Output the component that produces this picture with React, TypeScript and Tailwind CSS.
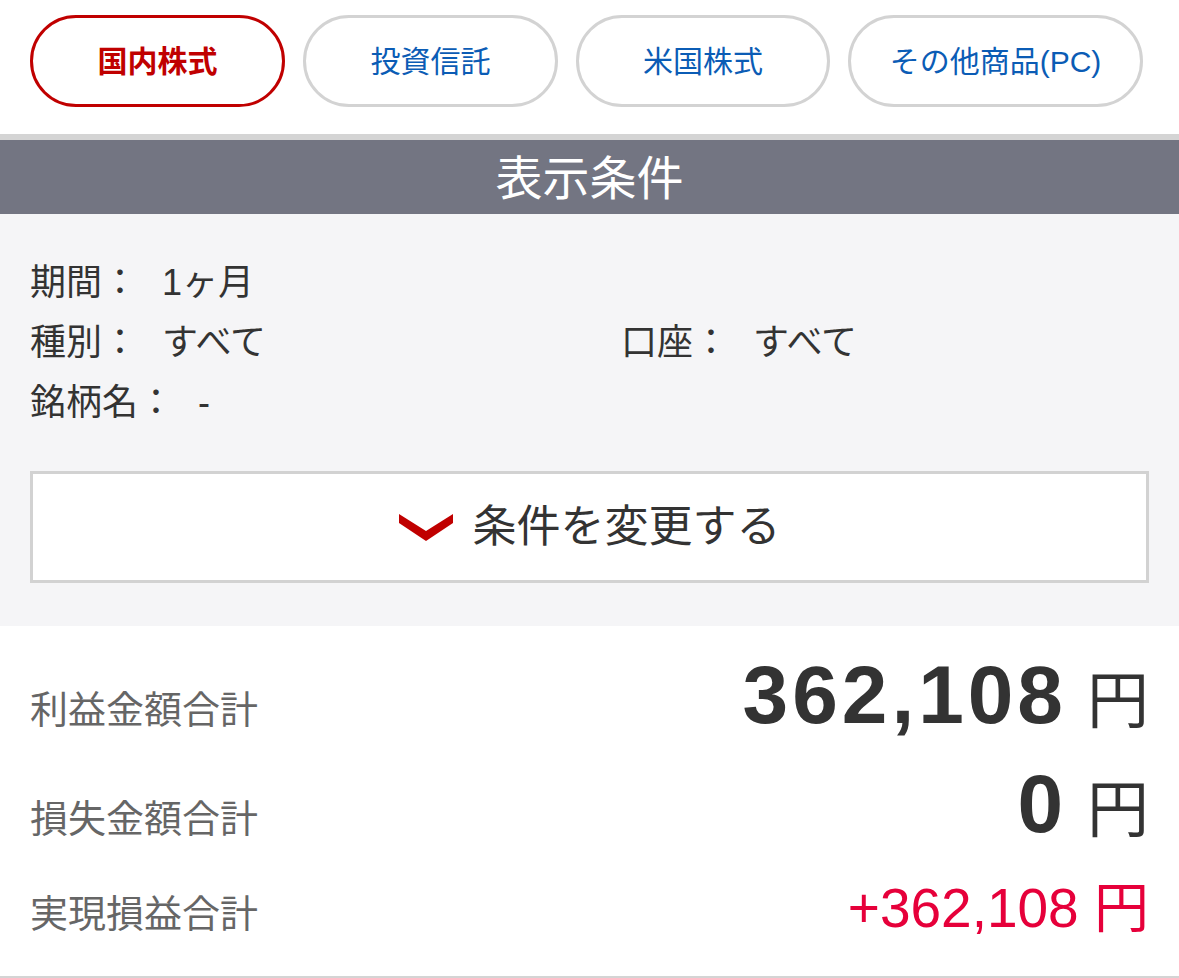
import React from 'react';

const font = { fontFamily: '"Liberation Sans", "Noto Sans CJK JP", sans-serif' };

const tabs = [
  { label: '国内株式', width: 'w-[255px]', active: true },
  { label: '投資信託', width: 'w-[255px]', active: false },
  { label: '米国株式', width: 'w-[254px]', active: false },
  { label: 'その他商品(PC)', width: 'w-[295px]', active: false },
];

const Chevron: React.FC = () => (
  <svg width="54" height="27" viewBox="0 0 54 27" className="shrink-0">
    <polygon points="0,0 27,17 54,0 54,9 27,27 0,9" fill="#c00000" />
  </svg>
);

const Cond: React.FC<{ label: string; value: string }> = ({ label, value }) => (
  <div>
    <span>{label}</span>
    <span className="ml-[24px]">{value}</span>
  </div>
);

export default function App() {
  return (
    <div className="w-[1179px] bg-white text-[#333]" style={font}>
      {/* tabs */}
      <div className="flex gap-[18px] pl-[30px] pt-[15px] pb-[27px]">
        {tabs.map((t) => (
          <div
            key={t.label}
            className={`${t.width} h-[92px] shrink-0 rounded-full border-[3px] flex items-center justify-center text-[30px] ${
              t.active
                ? 'border-[#c00000] text-[#c00000] font-bold'
                : 'border-[#d3d3d3] text-[#0b5cb5]'
            }`}>
            {t.label}
          </div>
        ))}
      </div>

      <div className="h-[6px] bg-[#d4d4d4]" />
      <div className="h-[74px] bg-[#737582] flex items-center justify-center text-white text-[47px] pt-[4px]">
        表示条件
      </div>

      {/* conditions */}
      <div className="bg-[#f5f5f7] px-[30px] pt-[39px] pb-[43px]">
        <div className="text-[36px] leading-[60px]">
          <Cond label="期間：" value="1ヶ月" />
          <div className="flex">
            <div className="w-[591px]">
              <Cond label="種別：" value="すべて" />
            </div>
            <Cond label="口座：" value="すべて" />
          </div>
          <Cond label="銘柄名：" value="-" />
        </div>
        <button className="mt-[38px] w-full h-[112px] bg-white border-[3px] border-[#d2d2d2] flex items-center justify-center gap-[20px] text-[44px] text-[#333]">
          <Chevron />
          <span>条件を変更する</span>
        </button>
      </div>

      {/* summary */}
      <div className="px-[30px] pt-[28px] border-b-[3px] border-[#d4d4d4]">
        <div className="h-[109px] flex items-baseline justify-between">
          <span className="text-[38px] leading-none text-[#666]">利益金額合計</span>
          <span className="leading-none">
            <span className="text-[82px] leading-none font-bold tracking-[4px]">362,108</span>
            <span className="text-[62px] leading-none ml-[20px]">円</span>
          </span>
        </div>
        <div className="h-[118px] flex items-baseline justify-between">
          <span className="text-[38px] leading-none text-[#666]">損失金額合計</span>
          <span className="leading-none">
            <span className="text-[82px] leading-none font-bold tracking-[4px]">0</span>
            <span className="text-[62px] leading-none ml-[20px]">円</span>
          </span>
        </div>
        <div className="h-[95px] flex items-baseline justify-between">
          <span className="text-[38px] leading-none text-[#666]">実現損益合計</span>
          <span className="text-[55px] leading-none text-[#e6003a]">+362,108 円</span>
        </div>
      </div>
    </div>
  );
}
